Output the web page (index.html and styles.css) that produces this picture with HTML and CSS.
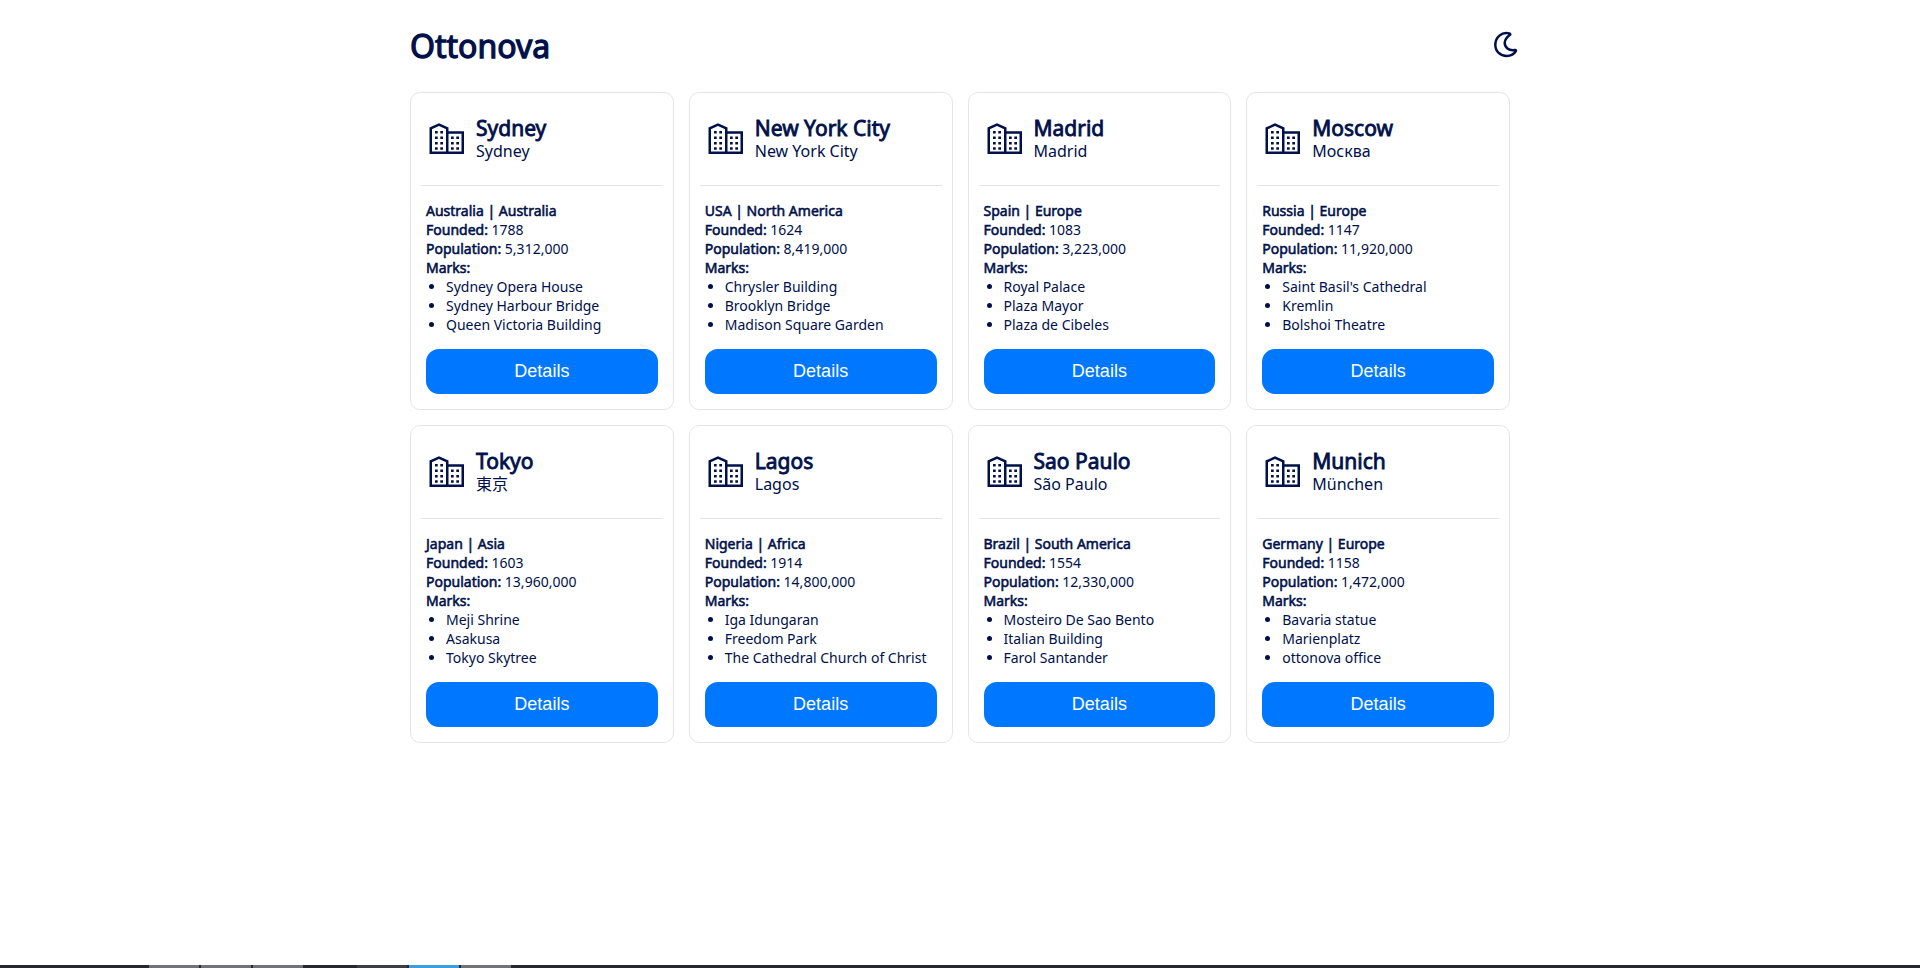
FILE: index.html
```html
<!DOCTYPE html>
<html lang="en">
<head>
<meta charset="utf-8">
<title>Ottonova</title>
<link rel="stylesheet" href="styles.css">
</head>
<body>
<svg class="sprite" aria-hidden="true">
  <symbol id="city" viewBox="0 0 40 40">
    <path fill="none" stroke="currentColor" stroke-width="2.500" d="M4.750 34.750V10.400L13 6.700L21.250 10.400V34.750ZM21.250 14.500H36.750V34.750H21.250"/>
    <path fill="currentColor" d="M9 13h2.700v2.600H9zM14.300 13H17v2.600h-2.700zM9 18.500h2.700v2.600H9zM14.300 18.500H17v2.600h-2.700zM9 24h2.700v2.600H9zM14.300 24H17v2.600h-2.700zM9 29.200h2.700v2.600H9zM14.300 29.200H17v2.600h-2.700zM25 18.500h2.700v2.600H25zM30.300 18.500H33v2.600h-2.700zM25 24h2.700v2.600H25zM30.300 24H33v2.600h-2.700zM25 29.200h2.700v2.600H25zM30.300 29.200H33v2.600h-2.700z"/>
  </symbol>
</svg>
<div class="page">
  <header class="top">
    <h1 class="brand">Ottonova</h1>
    <button class="theme" type="button" aria-label="Dark mode">
      <svg class="moon" viewBox="0 4 30 30" aria-hidden="true"><path fill="none" stroke="currentColor" stroke-width="2.500" stroke-linejoin="round" d="M20 7.800C20.600 7.200 20.200 6.600 19.400 6.400C11.500 4.400 5.300 10.500 5.300 17.800C5.300 24.600 10.500 29 16.600 29C20.800 29 24.300 27 25.800 24.200C26.200 23.400 25.800 22.900 25 23C18.500 24 14.700 20.300 14.700 15.800C14.700 12.300 16.800 10.300 20 7.800Z"/></svg>
    </button>
  </header>
  <main class="grid" id="grid"></main>
</div>
<footer class="dock">
  <span class="task"></span><span class="task"></span><span class="task"></span>
  <span class="task dim"></span><span class="task active"></span><span class="task"></span>
</footer>
<script src="cities.js"></script>
</body>
</html>
```
FILE: styles.css
```css
* { box-sizing: border-box; }
body {
  margin: 0;
  min-height: 100vh;
  display: flex;
  flex-direction: column;
  background: #fff;
  color: #00104a;
  font-family: "Noto Sans", "Noto Sans CJK JP", sans-serif;
  font-size: 14px;
  line-height: 19px;
}
.sprite { display: none; }
.page {
  flex: 1;
  width: 100%;
  max-width: 1120px;
  margin: 0 auto;
  padding: 24px 0;
}
.top {
  display: flex;
  justify-content: space-between;
  align-items: center;
  padding-left: 10px;
  margin-bottom: 24px;
}
.brand, .name, .label {
  font-weight: 400;
  -webkit-text-stroke: 0.04em currentColor;
}
.brand { margin: 0; font-size: 32px; line-height: 44px; }
.theme {
  padding: 0;
  border: 0;
  background: none;
  color: inherit;
  cursor: pointer;
}
.moon { display: block; width: 30px; height: 30px; }
.grid {
  display: grid;
  grid-template-columns: repeat(auto-fill, minmax(250px, 1fr));
  gap: 15px;
  padding: 0 10px;
}
.card {
  border: 1px solid #e4e5ec;
  border-radius: 10px;
}
.head {
  display: flex;
  align-items: center;
  gap: 10px;
  margin: 0 10px;
  padding: 22px 5px 25px;
  border-bottom: 1px solid #e4e5e9;
}
.icon { width: 40px; height: 40px; }
.name { margin: 0; font-size: 21px; line-height: 27px; }
.native { margin: 0; font-size: 16px; line-height: 18px; }
.body { padding: 15px; }
.body p { margin: 0; }
.marks { margin: 0 0 15px; padding-left: 20px; }
.details {
  display: block;
  width: 100%;
  height: 45px;
  border: 0;
  border-radius: 13px;
  background: #07f;
  color: #fff;
  font-family: "Liberation Sans", Arial, sans-serif;
  font-size: 18px;
  cursor: pointer;
}
.dock {
  display: flex;
  gap: 2px;
  height: 3px;
  padding-left: 149px;
  background: #25282d;
}
.task { width: 50px; background: #6f7276; }
.dim { margin-left: 52px; background: #3b3e43; }
.active { background: #3a9fdc; }
```
FILE: cities.js
```javascript
const cities = [
  ["Sydney", "Sydney", "Australia | Australia", "1788", "5,312,000", ["Sydney Opera House", "Sydney Harbour Bridge", "Queen Victoria Building"]],
  ["New York City", "New York City", "USA | North America", "1624", "8,419,000", ["Chrysler Building", "Brooklyn Bridge", "Madison Square Garden"]],
  ["Madrid", "Madrid", "Spain | Europe", "1083", "3,223,000", ["Royal Palace", "Plaza Mayor", "Plaza de Cibeles"]],
  ["Moscow", "Москва", "Russia | Europe", "1147", "11,920,000", ["Saint Basil's Cathedral", "Kremlin", "Bolshoi Theatre"]],
  ["Tokyo", "東京", "Japan | Asia", "1603", "13,960,000", ["Meji Shrine", "Asakusa", "Tokyo Skytree"]],
  ["Lagos", "Lagos", "Nigeria | Africa", "1914", "14,800,000", ["Iga Idungaran", "Freedom Park", "The Cathedral Church of Christ"]],
  ["Sao Paulo", "São Paulo", "Brazil | South America", "1554", "12,330,000", ["Mosteiro De Sao Bento", "Italian Building", "Farol Santander"]],
  ["Munich", "München", "Germany | Europe", "1158", "1,472,000", ["Bavaria statue", "Marienplatz", "ottonova office"]]
];

document.getElementById("grid").innerHTML = cities.map(([name, native, place, founded, population, marks]) => `
  <article class="card">
    <header class="head">
      <svg class="icon" aria-hidden="true"><use href="#city"/></svg>
      <div><h2 class="name">${name}</h2><p class="native">${native}</p></div>
    </header>
    <div class="body">
      <p class="label">${place}</p>
      <p><span class="label">Founded:</span> ${founded}</p>
      <p><span class="label">Population:</span> ${population}</p>
      <p class="label">Marks:</p>
      <ul class="marks">${marks.map(m => `<li>${m}</li>`).join("")}</ul>
      <button class="details" type="button">Details</button>
    </div>
  </article>`).join("");
```
